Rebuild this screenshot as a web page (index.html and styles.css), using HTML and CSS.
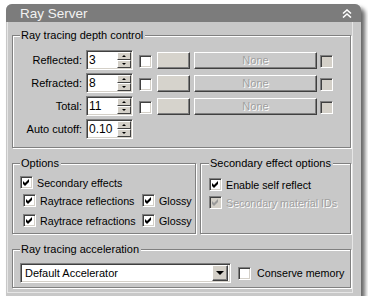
FILE: index.html
```html
<!DOCTYPE html>
<html lang="en">
<head>
    <meta charset="UTF-8">
    <title>Ray Server</title>
    <link rel="stylesheet" href="styles.css">
</head>
<body>
<div class="panel">
    <div class="header">
        <span class="title">Ray Server</span>
        <svg class="collapse" width="10" height="9" viewBox="0 0 10 9">
            <polyline points="1,4.5 5,1 9,4.5" />
            <polyline points="1,8.5 5,5 9,8.5" />
        </svg>
    </div>
    <div class="content">
        <fieldset class="group depth">
            <legend>Ray tracing depth control</legend>
            <div class="row">
                <span class="row-label">Reflected:</span>
                <div class="spinner"><span class="value">3</span><span class="arrows"><span class="up"></span><span class="down"></span></span></div>
                <span class="cb"></span>
                <span class="btn swatch"></span>
                <span class="btn none">None</span>
                <span class="cb off"></span>
            </div>
            <div class="row">
                <span class="row-label">Refracted:</span>
                <div class="spinner"><span class="value">8</span><span class="arrows"><span class="up"></span><span class="down"></span></span></div>
                <span class="cb"></span>
                <span class="btn swatch"></span>
                <span class="btn none">None</span>
                <span class="cb off"></span>
            </div>
            <div class="row">
                <span class="row-label">Total:</span>
                <div class="spinner"><span class="value">11</span><span class="arrows"><span class="up"></span><span class="down"></span></span></div>
                <span class="cb"></span>
                <span class="btn swatch"></span>
                <span class="btn none">None</span>
                <span class="cb off"></span>
            </div>
            <div class="row">
                <span class="row-label">Auto cutoff:</span>
                <div class="spinner"><span class="value">0.10</span><span class="arrows"><span class="up"></span><span class="down"></span></span></div>
            </div>
        </fieldset>

        <div class="pair">
            <fieldset class="group options">
                <legend>Options</legend>
                <label class="check"><span class="cb"><svg class="tick" width="7" height="7" viewBox="0 0 7 7"><polygon points="0,2 2,4 6,0 6,3 2,7 0,5" /></svg></span>Secondary effects</label>
                <div class="sub-row">
                    <label class="check wide"><span class="cb"><svg class="tick" width="7" height="7" viewBox="0 0 7 7"><polygon points="0,2 2,4 6,0 6,3 2,7 0,5" /></svg></span>Raytrace reflections</label>
                    <label class="check"><span class="cb"><svg class="tick" width="7" height="7" viewBox="0 0 7 7"><polygon points="0,2 2,4 6,0 6,3 2,7 0,5" /></svg></span>Glossy</label>
                </div>
                <div class="sub-row">
                    <label class="check wide"><span class="cb"><svg class="tick" width="7" height="7" viewBox="0 0 7 7"><polygon points="0,2 2,4 6,0 6,3 2,7 0,5" /></svg></span>Raytrace refractions</label>
                    <label class="check"><span class="cb"><svg class="tick" width="7" height="7" viewBox="0 0 7 7"><polygon points="0,2 2,4 6,0 6,3 2,7 0,5" /></svg></span>Glossy</label>
                </div>
            </fieldset>
            <fieldset class="group secondary">
                <legend>Secondary effect options</legend>
                <label class="check"><span class="cb"><svg class="tick" width="7" height="7" viewBox="0 0 7 7"><polygon points="0,2 2,4 6,0 6,3 2,7 0,5" /></svg></span>Enable self reflect</label>
                <label class="check disabled"><span class="cb off"><svg class="tick" width="7" height="7" viewBox="0 0 7 7"><polygon points="0,2 2,4 6,0 6,3 2,7 0,5" /></svg></span>Secondary material IDs</label>
            </fieldset>
        </div>

        <fieldset class="group accel">
            <legend>Ray tracing acceleration</legend>
            <div class="accel-row">
                <div class="dropdown"><span class="value">Default Accelerator</span><span class="drop-btn"></span></div>
                <label class="check memory"><span class="cb"></span>Conserve memory</label>
            </div>
        </fieldset>
    </div>
</div>
</body>
</html>
```

FILE: styles.css
```css
body {
    margin: 0;
    background: #fff;
    font-family: "Liberation Sans", Arial, sans-serif;
    font-size: 11px;
    color: #000;
}
.panel {
    margin: 4px 0 0 6px;
    width: 355px;
    height: 292px;
    background: #c8c8c8;
    border-radius: 6px 6px 0 0;
    box-shadow: 4px 4px 4px rgba(0, 0, 0, 0.6);
    display: flex;
    flex-direction: column;
}
.header {
    height: 18px;
    background: #7c7c7c;
    border-radius: 6px 6px 0 0;
    display: flex;
    align-items: center;
    justify-content: space-between;
    padding: 0 9px 0 14px;
    color: #f2f2f2;
    font-size: 13.5px;
}
.collapse polyline {
    fill: none;
    stroke: #fff;
    stroke-width: 1.6;
}
.content {
    flex: 1;
    margin: 0 8px 3px 1px;
    border: 1px solid #e6e6e6;
    border-top: 0;
    padding: 7px 1px 0 4px;
    display: flex;
    flex-direction: column;
}

/* etched group boxes */
.group {
    margin: 0;
    padding: 0;
    min-width: 0;
    border: 1px solid #808080;
    box-shadow: inset 1px 1px 0 #fff, 1px 1px 0 #fff;
}
.group legend {
    padding: 0 2px 0 1px;
    line-height: 13px;
    background: #c8c8c8;
}

.depth {
    padding: 8px 0 8px 7px;
    display: flex;
    flex-direction: column;
    gap: 3px;
}
.row {
    display: flex;
    align-items: flex-start;
    height: 20px;
}
.row-label {
    width: 62px;
    line-height: 20px;
    text-align: right;
    margin-right: 4px;
}

.spinner {
    width: 47px;
    height: 20px;
    box-sizing: border-box;
    background: #fff;
    border: 1px solid;
    border-color: #808080 #fff #fff #808080;
    box-shadow: inset 1px 1px 0 #404040, inset -1px -1px 0 #d4d0c8;
    padding: 1px 1px 1px 2px;
    display: flex;
    justify-content: space-between;
    align-items: center;
}
.spinner .value {
    font-size: 12px;
}
.arrows {
    width: 14px;
    height: 16px;
    display: flex;
    flex-direction: column;
}
.arrows span {
    flex: 1;
    background: #d4d0c8;
    border: 1px solid;
    border-color: #fff #404040 #404040 #fff;
    display: flex;
    align-items: center;
    justify-content: center;
}
.arrows .up::after,
.arrows .down::after {
    content: "";
    border-left: 2px solid transparent;
    border-right: 2px solid transparent;
}
.arrows .up::after {
    border-bottom: 2px solid #000;
}
.arrows .down::after {
    border-top: 2px solid #000;
}

/* checkboxes */
.cb {
    width: 13px;
    height: 13px;
    box-sizing: border-box;
    flex: none;
    background: #fff;
    border: 1px solid;
    border-color: #808080 #fff #fff #808080;
    box-shadow: inset 1px 1px 0 #404040, inset -1px -1px 0 #d4d0c8;
    display: flex;
    align-items: center;
    justify-content: center;
}
.cb.off {
    background: #d4d0c8;
}
.tick polygon {
    fill: #000;
}
.cb.off .tick polygon {
    fill: #9a9a9a;
}
.row .cb {
    margin: 5px 5px 0 6px;
}
.row .cb.off {
    margin: 5px 0 0 3px;
}

/* buttons */
.btn {
    height: 17px;
    box-sizing: border-box;
    margin-top: 2px;
    border: 1px solid;
    border-color: #fff #404040 #404040 #fff;
    box-shadow: inset -1px -1px 0 #808080;
}
.swatch {
    width: 33px;
    background: #d6d3cc;
    margin-right: 4px;
}
.none {
    width: 123px;
    background: #cacaca;
    color: #a0a0a0;
    text-shadow: 1px 1px 0 #fff;
    text-align: center;
    line-height: 15px;
}

/* options */
.pair {
    margin-top: 9px;
    display: flex;
    gap: 4px;
}
.options {
    width: 184px;
    box-sizing: border-box;
    padding: 6px 0 6px 7px;
}
.secondary {
    flex: 1;
    padding: 8px 0 6px 8px;
}
.check {
    display: flex;
    align-items: center;
    gap: 4px;
    height: 13px;
    font-size: 10.7px;
    white-space: nowrap;
}
.sub-row {
    display: flex;
    padding-left: 3px;
    margin-top: 5px;
}
.sub-row + .sub-row {
    margin-top: 7px;
}
.check.wide {
    width: 119px;
}
.secondary .check + .check {
    margin-top: 5px;
}
.check.disabled {
    color: #a0a0a0;
    text-shadow: 1px 1px 0 #fff;
}

/* acceleration */
.accel {
    margin-top: 9px;
    padding: 7px 0 4px 7px;
}
.accel-row {
    display: flex;
    align-items: center;
}
.dropdown {
    width: 211px;
    height: 20px;
    box-sizing: border-box;
    background: #fff;
    border: 1px solid;
    border-color: #808080 #fff #fff #808080;
    box-shadow: inset 1px 1px 0 #404040, inset -1px -1px 0 #d4d0c8;
    padding: 2px 2px 2px 4px;
    display: flex;
    justify-content: space-between;
    align-items: center;
}
.drop-btn {
    width: 16px;
    height: 16px;
    box-sizing: border-box;
    background: #d4d0c8;
    border: 1px solid;
    border-color: #fff #404040 #404040 #fff;
    box-shadow: inset -1px -1px 0 #808080;
    display: flex;
    align-items: center;
    justify-content: center;
}
.drop-btn::after {
    content: "";
    border-left: 4px solid transparent;
    border-right: 4px solid transparent;
    border-top: 4px solid #000;
}
.memory {
    margin-left: 7px;
    gap: 6px;
}
```
